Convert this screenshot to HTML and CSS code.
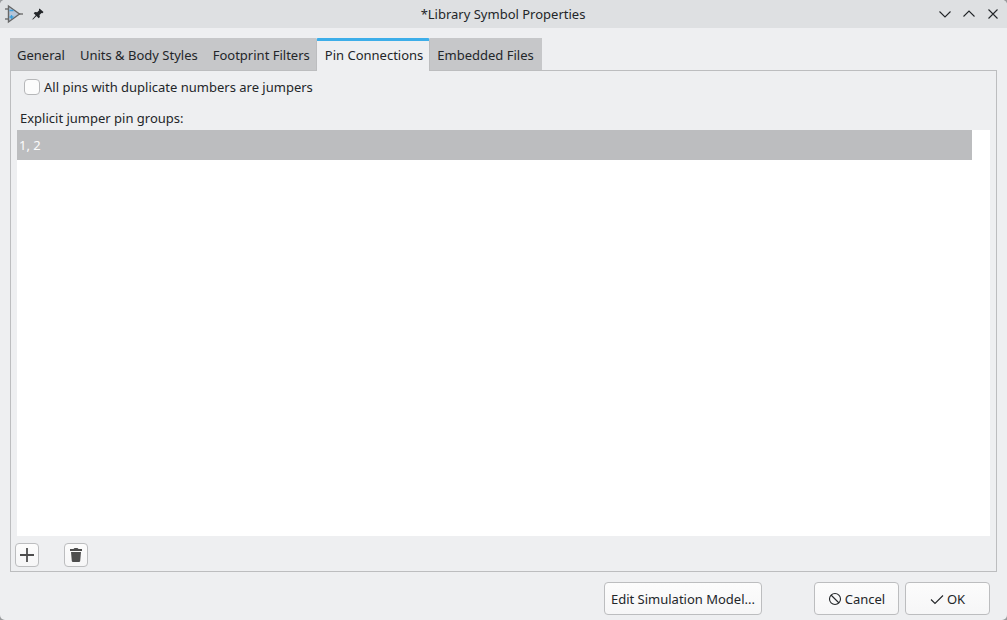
FILE: index.html
```
<!DOCTYPE html>
<html lang="en">
<head>
    <meta charset="UTF-8">
    <meta name="viewport" content="width=device-width, initial-scale=1.0">
    <title>Library Symbol Properties</title>
    <link rel="stylesheet" href="styles.css">
</head>
<body>
    <div class="window">
        <!-- Title bar -->
        <header class="titlebar">
            <div class="titlebar-side">
                <svg width="20" height="20" viewBox="0 0 20 20" fill="none">
                    <path d="M0 5h4M0 15h4M14 10h4" stroke="#777" stroke-width="1.4"/>
                    <path d="M3.500 2v16L14.500 10z" fill="#b5c5d8" stroke="#666" stroke-width="1.4"/>
                    <path d="M4.500 6.500h4M4.500 13h4M6.500 11v4" stroke="#3a9fdc" stroke-width="1.3"/>
                </svg>
                <button class="title-button" aria-label="Keep above others">
                    <svg width="12" height="12" viewBox="0 0 12 12">
                        <path fill="#232629" d="M7.5.5l4 3.500-1 1.200-1-.2-2 2 .4 2-1.200 1.300-2.200-2.200L1 11.500H.5V11l3.200-3.700L1.700 5.200 3 4l2.200.3 2-2-.3-1z"/>
                    </svg>
                </button>
            </div>
            <h1 class="title">*Library Symbol Properties</h1>
            <div class="titlebar-side titlebar-controls">
                <button class="title-button" aria-label="Minimize">
                    <svg width="12" height="12" viewBox="0 0 12 12"><path class="line" d="M.5 3.500L6 9l5.500-5.500"/></svg>
                </button>
                <button class="title-button" aria-label="Maximize">
                    <svg width="12" height="12" viewBox="0 0 12 12"><path class="line" d="M.5 8.500L6 3l5.500 5.500"/></svg>
                </button>
                <button class="title-button" aria-label="Close">
                    <svg width="12" height="12" viewBox="0 0 12 12"><path class="line" d="M1.500 1.500l9 9M10.500 1.500l-9 9"/></svg>
                </button>
            </div>
        </header>

        <main class="content">
            <div class="tabs" role="tablist">
                <button class="tab" role="tab">General</button>
                <button class="tab" role="tab">Units &amp; Body Styles</button>
                <button class="tab" role="tab">Footprint Filters</button>
                <button class="tab active" role="tab" aria-selected="true">Pin Connections</button>
                <button class="tab" role="tab">Embedded Files</button>
            </div>

            <section class="panel" role="tabpanel">
                <div class="option">
                    <input type="checkbox" id="jumpers" class="checkbox">
                    <label for="jumpers">All pins with duplicate numbers are jumpers</label>
                </div>
                <div class="list-label" id="groups-label">Explicit jumper pin groups:</div>
                <ul class="list" role="listbox" aria-labelledby="groups-label">
                    <li class="list-row" role="option" aria-selected="true">1, 2</li>
                </ul>
                <div class="list-tools">
                    <button class="icon-button" aria-label="Add">
                        <svg width="14" height="14" viewBox="0 0 14 14"><path d="M7 0v14M0 7h14" stroke="#4d4d4d" stroke-width="1.8"/></svg>
                    </button>
                    <button class="icon-button" aria-label="Delete">
                        <svg width="14" height="14" viewBox="0 0 14 14"><path fill="#4d4d4d" d="M1 1h3.500l1-1h3l1 1H13v2H1zM2 4h10l-.8 9q-.1 1-1.200 1H4q-1.100 0-1.200-1z"/></svg>
                    </button>
                </div>
            </section>
        </main>

        <footer class="actions">
            <button class="button button-wide">Edit Simulation Model...</button>
            <button class="button">
                <svg width="14" height="14" viewBox="0 0 14 14"><circle class="line" cx="7" cy="7" r="5.500"/><path class="line" d="M3 3l8 8"/></svg>
                Cancel
            </button>
            <button class="button">
                <svg width="14" height="14" viewBox="0 0 14 14"><path class="line" d="M1 7.500l4 4 8-8"/></svg>
                OK
            </button>
        </footer>
    </div>
</body>
</html>
```
FILE: styles.css
```
* {
    margin: 0;
    padding: 0;
    box-sizing: border-box;
}

body {
    background: #999b9d;
    font-family: "Noto Sans", sans-serif;
    font-size: 13px;
    line-height: 20px;
    color: #232629;
}

button {
    font: inherit;
    color: inherit;
    border: none;
    background: none;
}

svg {
    display: block;
    flex: none;
}

.line {
    fill: none;
    stroke: #232629;
    stroke-width: 1.1;
}

.window {
    display: flex;
    flex-direction: column;
    min-height: 100vh;
    background: #eeeff1;
    border-radius: 5px;
    overflow: hidden;
}

/* Title bar */
.titlebar {
    display: flex;
    align-items: center;
    height: 28px;
    padding: 0 6px 0 5px;
    background: #dee0e2;
}

.titlebar-side {
    display: flex;
    align-items: center;
    flex: 1;
    gap: 5px;
}

.titlebar-controls {
    justify-content: flex-end;
    gap: 8px;
}

.title {
    font-size: 13px;
    font-weight: 400;
}

.title-button {
    display: flex;
    align-items: center;
    justify-content: center;
    width: 16px;
    height: 16px;
}

/* Tabs */
.content {
    display: flex;
    flex-direction: column;
    flex: 1;
    padding: 10px 10px 0;
}

.tabs {
    display: flex;
}

.tab {
    height: 33px;
    padding: 1px 8px 0 7px;
    background: #c6c7c9;
    border-bottom: 1px solid #a3a4a6;
}

.tab:has(+ .active) {
    padding-right: 6px;
}

.tab.active {
    position: relative;
    padding: 0 6px 2px 8px;
    background: #eeeff1;
    border: 1px solid #bcbdbf;
    border-top: 3px solid #3daee9;
    border-bottom: none;
    border-radius: 2px 2px 0 0;
}

/* Tab page */
.panel {
    display: flex;
    flex-direction: column;
    flex: 1;
    margin-top: -1px;
    padding: 6px 6px 4px;
    border: 1px solid #bcbdbf;
}

.option {
    display: flex;
    align-items: center;
    gap: 4px;
    padding-left: 7px;
}

.checkbox {
    appearance: none;
    width: 16px;
    height: 16px;
    background: #fcfcfc;
    border: 1px solid #b6b7b9;
    border-radius: 4px;
}

.checkbox:checked {
    background: #3daee9;
}

.list-label {
    padding: 11px 3px 2px;
}

.list {
    flex: 1;
    padding-right: 18px;
    background: #fff;
    list-style: none;
}

.list-row {
    padding: 5px 2px;
    background: #bcbdbf;
    color: #fcfcfc;
}

.list-tools {
    display: flex;
    gap: 25px;
    margin-left: -2px;
    padding-top: 7px;
}

/* Buttons */
.icon-button,
.button {
    display: flex;
    align-items: center;
    justify-content: center;
    background: linear-gradient(#fcfcfc, #f6f6f7);
    border: 1px solid #bcbdbf;
    border-radius: 4px;
}

.icon-button {
    width: 24px;
    height: 24px;
}

.actions {
    display: flex;
    justify-content: flex-end;
    gap: 6px;
    padding: 10px 17px 5px;
}

.button {
    gap: 3px;
    min-width: 85px;
    height: 33px;
    padding: 0 6px;
}

.button-wide {
    margin-right: 46px;
}
```
